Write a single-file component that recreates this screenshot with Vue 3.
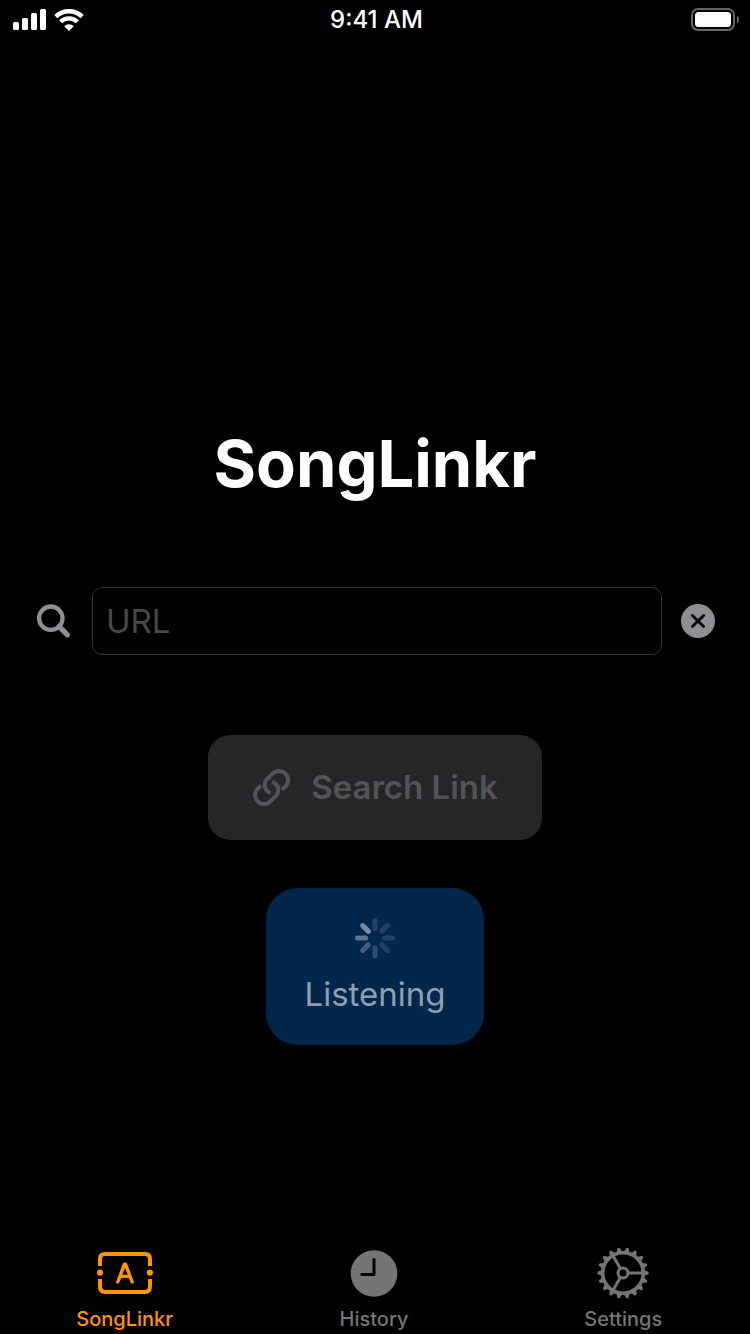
<script setup>
import { ref } from 'vue'

const url = ref('')
const active = ref('SongLinkr')
const teeth = Array.from({ length: 18 }, (_, i) => i * 20)
const spokes = [0, 120, 240]
const spinner = [0.15, 0.15, 0.15, 0.15, 0.2, 0.3, 0.42, 0.55]
</script>

<template>
  <div class="screen">
    <header class="status">
      <div class="signals">
        <svg width="34" height="22" viewBox="0 0 34 22" fill="#fff" aria-hidden="true">
          <rect x="0" y="13" width="6" height="8" rx="1.5" />
          <rect x="9" y="9" width="6" height="12" rx="1.5" />
          <rect x="18" y="4" width="6" height="17" rx="1.5" />
          <rect x="27" y="0" width="6" height="21" rx="1.5" />
        </svg>
        <svg width="30" height="22" viewBox="0 0 30 22" aria-hidden="true">
          <g fill="none" stroke="#fff" stroke-width="4.4">
            <path d="M1.8 7.6A19 19 0 0 1 28.2 7.6" />
            <path d="M6.6 12.8A12 12 0 0 1 23.4 12.8" />
          </g>
          <path d="M15 22L10.2 17.3A6.8 6.8 0 0 1 19.8 17.3Z" fill="#fff" />
        </svg>
      </div>
      <time class="clock">9:41 AM</time>
      <div class="battery">
        <svg width="49" height="24" viewBox="0 0 49 24" aria-hidden="true">
          <rect x="1" y="1" width="42" height="21" rx="6" fill="none" stroke="#666" stroke-width="2" />
          <rect x="4" y="4" width="36" height="15" rx="3.5" fill="#fff" />
          <path d="M46 8C48.4 9 48.4 14 46 15Z" fill="#777" />
        </svg>
      </div>
    </header>

    <main class="content">
      <h1 class="title">SongLinkr</h1>

      <form class="search" @submit.prevent>
        <label class="search-icon" for="url" aria-label="URL">
          <svg width="37" height="37" viewBox="0 0 37 37" fill="none" stroke="#8e8e93">
            <circle cx="14.8" cy="15.2" r="11.7" stroke-width="4.3" />
            <path d="M23.2 23.6L31.4 31.8" stroke-width="5.2" stroke-linecap="round" />
          </svg>
        </label>
        <input id="url" v-model="url" class="url" type="text" placeholder="URL" />
        <button class="clear" type="button" aria-label="Clear" @click="url = ''">
          <svg width="34" height="34" viewBox="0 0 34 34">
            <circle cx="17" cy="17" r="17" fill="#8e8e93" />
            <path d="M11.4 11.4L22.6 22.6M22.6 11.4L11.4 22.6" stroke="#000" stroke-width="2.8" stroke-linecap="round" />
          </svg>
        </button>
      </form>

      <button class="link-button" type="button" disabled>
        <svg width="39" height="39" viewBox="0 0 39 39" fill="none" stroke="#535357" stroke-width="4" aria-hidden="true">
          <path d="M30.2 21.6L33.4 18.4A9 9 0 0 0 20.6 5.6L15.2 11A8.4 8.4 0 0 0 18.8 25" />
          <path d="M8.8 17.4L5.6 20.6A9 9 0 0 0 18.4 33.4L23.8 28A8.4 8.4 0 0 0 20.2 14" />
        </svg>
        <span>Search Link</span>
      </button>

      <button class="listen" type="button" disabled>
        <svg width="40" height="40" viewBox="0 0 40 40" aria-hidden="true">
          <rect
            v-for="(o, i) in spinner"
            :key="i"
            x="17.4"
            y="0"
            width="5.2"
            height="13"
            rx="2.6"
            fill="#d9def0"
            :fill-opacity="o"
            :transform="`rotate(${i * 45} 20 20)`"
          />
        </svg>
        <span>Listening</span>
      </button>
    </main>

    <nav class="tabs">
      <button class="tab" :class="{ active: active === 'SongLinkr' }" type="button" @click="active = 'SongLinkr'">
        <svg width="56" height="52" viewBox="0 0 56 52" fill="none" stroke="currentColor" stroke-linecap="butt" aria-hidden="true">
          <path d="M3 19V12Q3 7 8 7H48Q53 7 53 12V19M3 32V39Q3 45 8 45H48Q53 45 53 39V32" stroke-width="4" />
          <circle cx="3.1" cy="25.6" r="3.1" fill="currentColor" stroke="none" />
          <circle cx="52.9" cy="25.6" r="3.1" fill="currentColor" stroke="none" />
          <path d="M20.8 35L27.5 17.2H28.5L35.2 35M23 29.4H33" stroke-width="3.4" stroke-linecap="round" stroke-linejoin="round" />
        </svg>
        <span>SongLinkr</span>
      </button>
      <button class="tab" :class="{ active: active === 'History' }" type="button" @click="active = 'History'">
        <svg width="52" height="52" viewBox="0 0 52 52" aria-hidden="true">
          <circle cx="26" cy="26.5" r="23.3" fill="currentColor" />
          <path d="M26 12.5V27.5H13.8" fill="none" stroke="#000" stroke-width="3" stroke-linecap="round" stroke-linejoin="round" />
        </svg>
        <span>History</span>
      </button>
      <button class="tab" :class="{ active: active === 'Settings' }" type="button" @click="active = 'Settings'">
        <svg width="52" height="52" viewBox="0 0 52 52" fill="none" stroke="currentColor" aria-hidden="true">
          <circle cx="26" cy="26" r="20.3" stroke-width="3.6" />
          <circle cx="26" cy="26" r="5" stroke-width="3" />
          <path v-for="a in spokes" :key="a" d="M31 26H46" stroke-width="3" :transform="`rotate(${a} 26 26)`" />
          <path
            v-for="t in teeth"
            :key="t"
            d="M47 23.2L51 24.6Q52.4 26 51 27.4L47 28.8Z"
            fill="currentColor"
            stroke="none"
            :transform="`rotate(${t} 26 26)`"
          />
        </svg>
        <span>Settings</span>
      </button>
    </nav>
  </div>
</template>

<style>
body {
  margin: 0;
  background: #000;
}
</style>

<style scoped>
.screen {
  display: flex;
  flex-direction: column;
  min-height: 100vh;
  background: #000;
  color: #fff;
  font-family: Inter, "Liberation Sans", sans-serif;
}

svg {
  display: block;
  flex: none;
}

button {
  margin: 0;
  padding: 0;
  border: 0;
  background: none;
  font-family: inherit;
}

.status {
  display: grid;
  grid-template-columns: 1fr auto 1fr;
  align-items: center;
  height: 40px;
  padding: 0 10px 0 13px;
}

.signals {
  display: flex;
  gap: 7px;
}

.clock {
  font-size: 24px;
  line-height: 40px;
  font-weight: 500;
}

.battery {
  justify-self: end;
}

.content {
  display: flex;
  flex: 1;
  flex-direction: column;
  align-items: center;
  padding-top: 384px;
}

.title {
  margin: 0;
  font-size: 65px;
  line-height: 80px;
  font-weight: 700;
}

.search {
  display: flex;
  align-items: center;
  gap: 19px;
  box-sizing: border-box;
  width: 100%;
  margin-top: 83px;
  padding: 0 35px 0 36px;
}

.url {
  flex: 1;
  box-sizing: border-box;
  min-width: 0;
  height: 68px;
  padding: 0 13px;
  border: 1px solid #343436;
  border-radius: 10px;
  outline: 0;
  background: #000;
  color: #fff;
  font-family: inherit;
  font-size: 33px;
}

.url::placeholder {
  color: #48484a;
  opacity: 1;
}

.link-button {
  display: flex;
  align-items: center;
  gap: 20px;
  margin-top: 80px;
  padding: 32px 44px 33px;
  border-radius: 22px;
  background: #262628;
  color: #535357;
  font-size: 33px;
  line-height: 40px;
  font-weight: 600;
}

.listen {
  display: flex;
  flex-direction: column;
  align-items: center;
  gap: 16px;
  margin-top: 48px;
  padding: 30px 38px 31px;
  border-radius: 32px;
  background: #03274a;
  color: #8f9eb5;
  font-size: 33px;
  line-height: 40px;
}

.tabs {
  display: grid;
  grid-template-columns: repeat(3, 1fr);
  height: 87px;
  padding-right: 2px;
}

.tab {
  display: flex;
  flex-direction: column;
  align-items: center;
  gap: 8px;
  color: #757575;
  font-size: 20px;
  line-height: 24px;
  font-weight: 500;
}

.tab.active {
  color: #ff9500;
}
</style>
